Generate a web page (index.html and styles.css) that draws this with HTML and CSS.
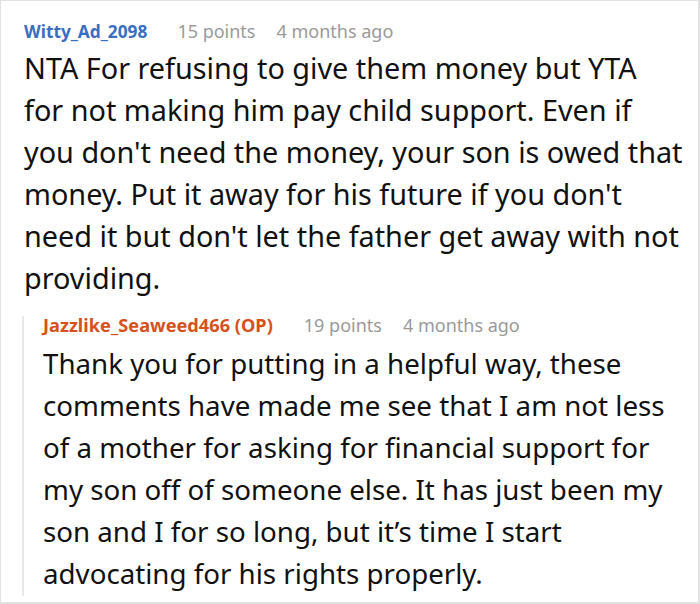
FILE: index.html
```html
<!DOCTYPE html>
<html>
<head>
<meta charset="utf-8">
<link rel="stylesheet" href="styles.css">
</head>
<body>
<div class="card">
  <div class="comment">
    <div class="meta">
      <span class="user">Witty_Ad_2098</span>
      <span class="points">15 points</span>
      <span class="time">4 months ago</span>
    </div>
    <p class="text">NTA For refusing to give them money but YTA<br>for not making him pay child support. Even if<br>you don't need the money, your son is owed that<br>money. Put it away for his future if you don't<br>need it but don't let the father get away with not<br>providing.</p>
  </div>
  <div class="reply">
    <div class="meta">
      <span class="user op">Jazzlike_Seaweed466 (OP)</span>
      <span class="points">19 points</span>
      <span class="time">4 months ago</span>
    </div>
    <p class="text reply-text">Thank you for putting in a helpful way, these<br>comments have made me see that I am not less<br>of a mother for asking for financial support for<br>my son off of someone else. It has just been my<br>son and I for so long, but it’s time I start<br>advocating for his rights properly.</p>
  </div>
</div>
</body>
</html>
```
FILE: styles.css
```css
html, body {
  margin: 0;
  padding: 0;
  background: #ffffff;
}
body {
  font-family: "Noto Sans", "Open Sans", sans-serif;
  color: #111111;
}
.card {
  width: 700px;
  height: 604px;
  box-sizing: border-box;
  border: 1px solid #e2e2e2;
  border-bottom-width: 2px;
  border-right-width: 2px;
  padding: 17px 10px 0 23px;
  overflow: hidden;
}
.meta {
  display: flex;
  align-items: baseline;
  white-space: nowrap;
  font-size: 18px;
  line-height: 26px;
}
.user {
  font-weight: 700;
  font-size: 17.3px;
  color: #3a6ec0;
  margin-right: 30px;
}
.points {
  color: #9a9a9a;
  margin-right: 21px;
}
.time {
  color: #9a9a9a;
}
.text {
  margin: 2px 0 0;
  font-size: 28.8px;
  line-height: 42px;
  white-space: nowrap;
}
.reply {
  margin-top: 23px;
  margin-left: -2px;
  padding: 0 0 2px 19px;
  border-left: 2px solid #e8e8e8;
}
.reply .meta {
  margin-top: -6px;
  line-height: 18px;
}
.reply .user {
  font-size: 18.2px;
  color: #d6511c;
  margin-right: 31px;
}
.reply-text {
  margin-top: 8px;
  font-size: 27.7px;
}
```
